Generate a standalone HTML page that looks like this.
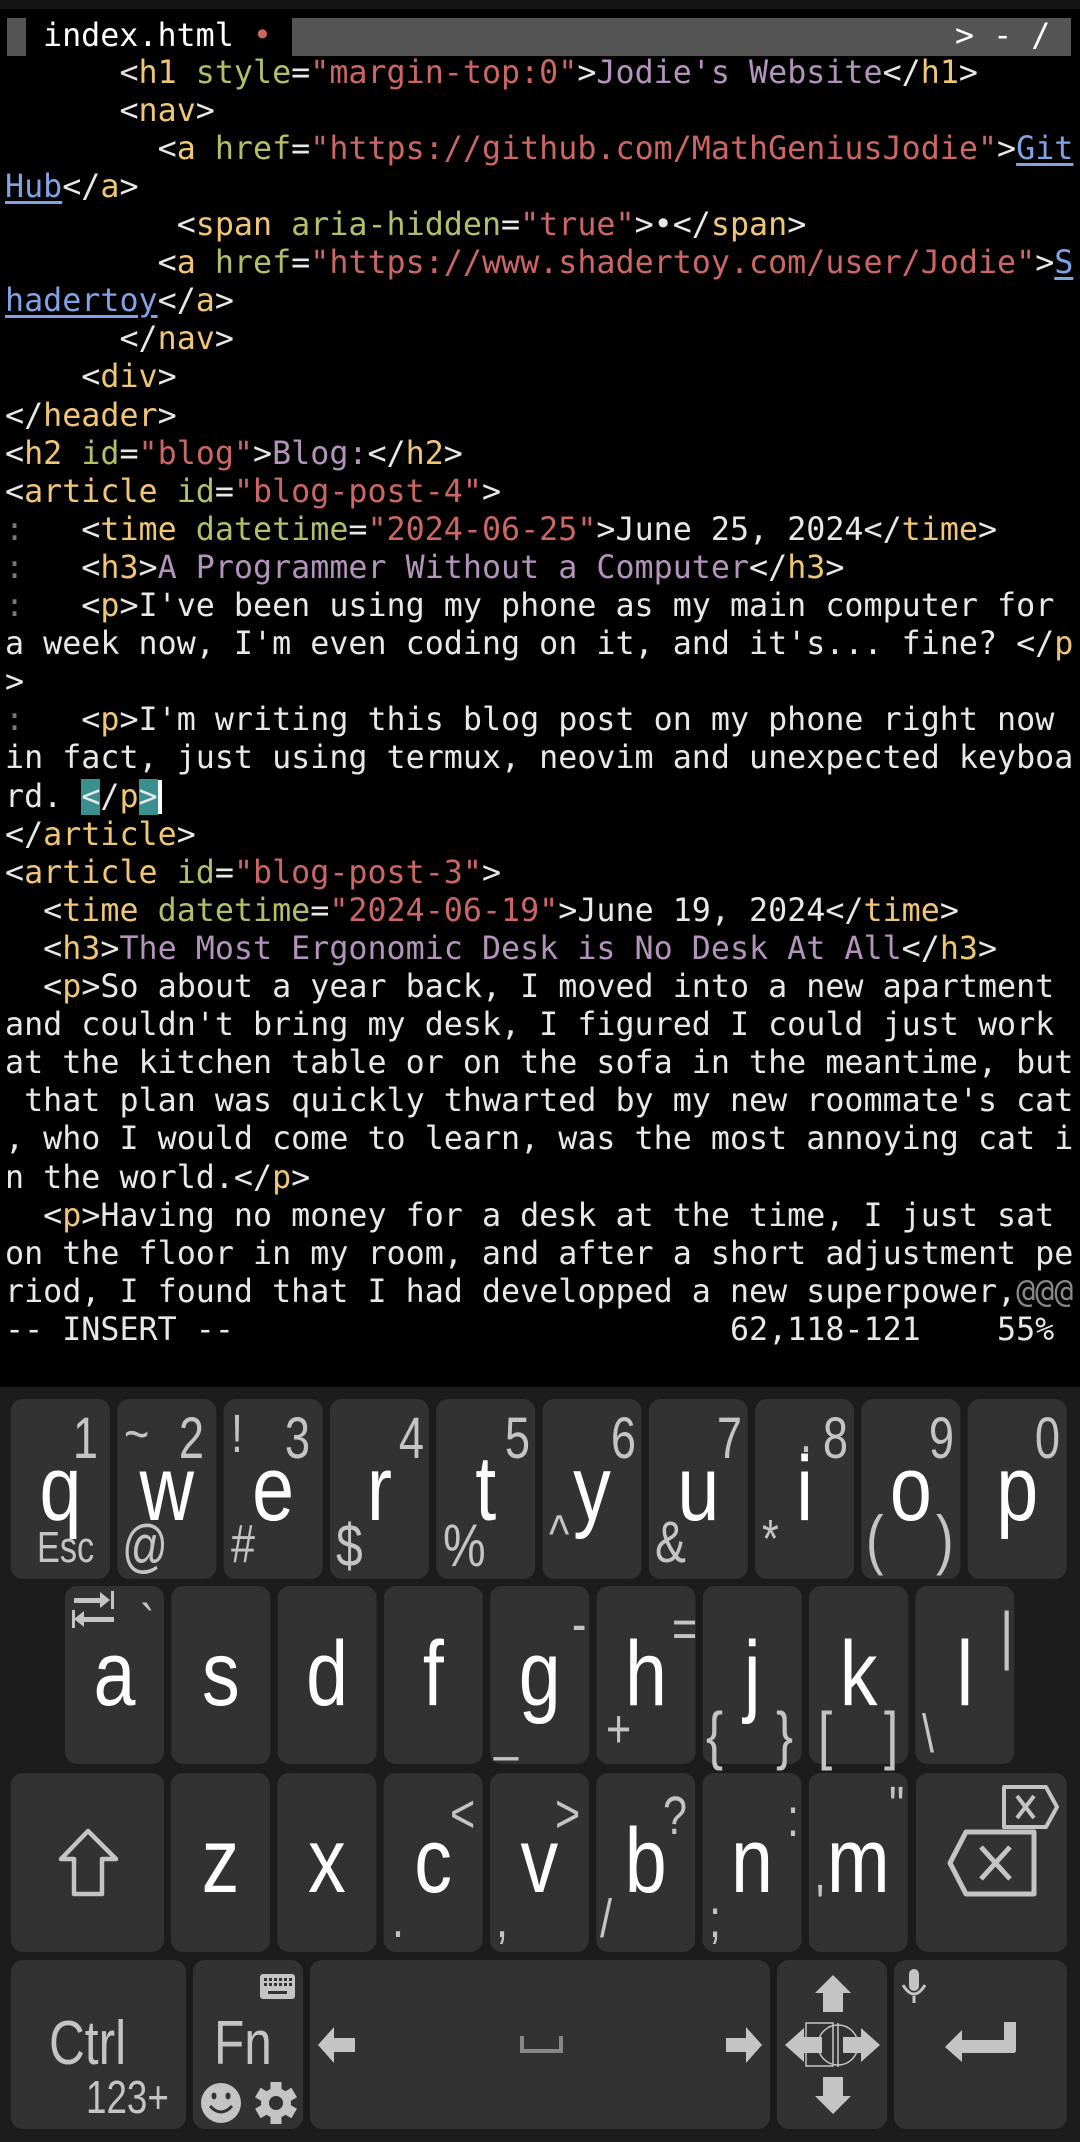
<!DOCTYPE html>
<html><head><meta charset="utf-8">
<style>
html,body{margin:0;padding:0;background:#000;}
body{width:1080px;height:2142px;position:relative;overflow:hidden;}
.term{position:absolute;left:0;top:0;width:1080px;height:1387px;background:#000;}
.ln{position:absolute;left:5px;white-space:pre;font-family:"DejaVu Sans Mono","Liberation Mono",monospace;font-size:31.7px;line-height:38px;height:38px;color:#e8e8e8;}
.t{color:#f0c674}.a{color:#b5bd68}.s{color:#cc6666}.p{color:#b294bb}.u{color:#82a2e6;text-decoration:underline;text-underline-offset:4px}.g{color:#777}.w{color:#e0e0e0}
.cur{background:#3a8f8f;}
</style></head><body>
<div class="term">
<div style="position:absolute;left:0;top:0;width:1080px;height:9px;background:#141414"></div>
<div style="position:absolute;left:7px;top:18px;width:19px;height:38px;background:#555"></div>
<div style="position:absolute;left:292px;top:18px;width:779px;height:38px;background:#555"></div>
<div class="ln" style="top:17px;left:43px;color:#fff">index.html <span class="s">•</span></div>
<div class="ln" style="top:17px;left:955px;color:#fff">&gt; - /</div>

<div class="ln" style="top:54px">      <span class="w">&lt;</span><span class="t">h1</span> <span class="a">style</span>=<span class="s">"margin-top:0"</span>&gt;<span class="p">Jodie's Website</span>&lt;/<span class="t">h1</span>&gt;</div>
<div class="ln" style="top:92px">      &lt;<span class="t">nav</span>&gt;</div>
<div class="ln" style="top:130px">        &lt;<span class="t">a</span> <span class="a">href</span>=<span class="s">"https://github.com/MathGeniusJodie"</span>&gt;<span class="u">Git</span></div>
<div class="ln" style="top:168px"><span class="u">Hub</span>&lt;/<span class="t">a</span>&gt;</div>
<div class="ln" style="top:206px">         &lt;<span class="t">span</span> <span class="a">aria-hidden</span>=<span class="s">"true"</span>&gt;•&lt;/<span class="t">span</span>&gt;</div>
<div class="ln" style="top:244px">        &lt;<span class="t">a</span> <span class="a">href</span>=<span class="s">"https://www.shadertoy.com/user/Jodie"</span>&gt;<span class="u">S</span></div>
<div class="ln" style="top:282px"><span class="u">hadertoy</span>&lt;/<span class="t">a</span>&gt;</div>
<div class="ln" style="top:320px">      &lt;/<span class="t">nav</span>&gt;</div>
<div class="ln" style="top:358px">    &lt;<span class="t">div</span>&gt;</div>
<div class="ln" style="top:397px">&lt;/<span class="t">header</span>&gt;</div>
<div class="ln" style="top:435px">&lt;<span class="t">h2</span> <span class="a">id</span>=<span class="s">"blog"</span>&gt;<span class="p">Blog:</span>&lt;/<span class="t">h2</span>&gt;</div>
<div class="ln" style="top:473px">&lt;<span class="t">article</span> <span class="a">id</span>=<span class="s">"blog-post-4"</span>&gt;</div>
<div class="ln" style="top:511px"><span class="g">:</span>   &lt;<span class="t">time</span> <span class="a">datetime</span>=<span class="s">"2024-06-25"</span>&gt;June 25, 2024&lt;/<span class="t">time</span>&gt;</div>
<div class="ln" style="top:549px"><span class="g">:</span>   &lt;<span class="t">h3</span>&gt;<span class="p">A Programmer Without a Computer</span>&lt;/<span class="t">h3</span>&gt;</div>
<div class="ln" style="top:587px"><span class="g">:</span>   &lt;<span class="t">p</span>&gt;I've been using my phone as my main computer for</div>
<div class="ln" style="top:625px">a week now, I'm even coding on it, and it's... fine? &lt;/<span class="t">p</span></div>
<div class="ln" style="top:663px">&gt;</div>
<div class="ln" style="top:701px"><span class="g">:</span>   &lt;<span class="t">p</span>&gt;I'm writing this blog post on my phone right now</div>
<div class="ln" style="top:739px">in fact, just using termux, neovim and unexpected keyboa</div>
<div class="ln" style="top:778px">rd. <span class="cur">&lt;</span>/<span class="t">p</span><span class="cur">&gt;</span><span style="display:inline-block;width:4px;height:34px;background:#fff;vertical-align:-7px"></span></div>
<div class="ln" style="top:816px">&lt;/<span class="t">article</span>&gt;</div>
<div class="ln" style="top:854px">&lt;<span class="t">article</span> <span class="a">id</span>=<span class="s">"blog-post-3"</span>&gt;</div>
<div class="ln" style="top:892px">  &lt;<span class="t">time</span> <span class="a">datetime</span>=<span class="s">"2024-06-19"</span>&gt;June 19, 2024&lt;/<span class="t">time</span>&gt;</div>
<div class="ln" style="top:930px">  &lt;<span class="t">h3</span>&gt;<span class="p">The Most Ergonomic Desk is No Desk At All</span>&lt;/<span class="t">h3</span>&gt;</div>
<div class="ln" style="top:968px">  &lt;<span class="t">p</span>&gt;So about a year back, I moved into a new apartment</div>
<div class="ln" style="top:1006px">and couldn't bring my desk, I figured I could just work</div>
<div class="ln" style="top:1044px">at the kitchen table or on the sofa in the meantime, but</div>
<div class="ln" style="top:1082px"> that plan was quickly thwarted by my new roommate's cat</div>
<div class="ln" style="top:1120px">, who I would come to learn, was the most annoying cat i</div>
<div class="ln" style="top:1159px">n the world.&lt;/<span class="t">p</span>&gt;</div>
<div class="ln" style="top:1197px">  &lt;<span class="t">p</span>&gt;Having no money for a desk at the time, I just sat</div>
<div class="ln" style="top:1235px">on the floor in my room, and after a short adjustment pe</div>
<div class="ln" style="top:1273px">riod, I found that I had developped a new superpower,<span style="color:#888">@@@</span></div>
<div class="ln" style="top:1311px">-- INSERT --                          62,118-121    55%</div>
</div>

<svg style="position:absolute;left:0;top:0" width="1080" height="2142" viewBox="0 0 1080 2142" xmlns="http://www.w3.org/2000/svg">
<rect x="0" y="1387" width="1080" height="755" fill="#1c1c1c"/>
<g fill="#323232">
<rect x="11" y="1399" width="99" height="180" rx="12"/>
<rect x="117.3" y="1399" width="99" height="180" rx="12"/>
<rect x="223.6" y="1399" width="99" height="180" rx="12"/>
<rect x="329.9" y="1399" width="99" height="180" rx="12"/>
<rect x="436.2" y="1399" width="99" height="180" rx="12"/>
<rect x="542.5" y="1399" width="99" height="180" rx="12"/>
<rect x="648.8" y="1399" width="99" height="180" rx="12"/>
<rect x="755.1" y="1399" width="99" height="180" rx="12"/>
<rect x="861.4" y="1399" width="99" height="180" rx="12"/>
<rect x="967.7" y="1399" width="99" height="180" rx="12"/>
<rect x="65" y="1586" width="99" height="178" rx="12"/>
<rect x="171.3" y="1586" width="99" height="178" rx="12"/>
<rect x="277.6" y="1586" width="99" height="178" rx="12"/>
<rect x="383.9" y="1586" width="99" height="178" rx="12"/>
<rect x="490.2" y="1586" width="99" height="178" rx="12"/>
<rect x="596.5" y="1586" width="99" height="178" rx="12"/>
<rect x="702.8" y="1586" width="99" height="178" rx="12"/>
<rect x="809.1" y="1586" width="99" height="178" rx="12"/>
<rect x="915.4" y="1586" width="99" height="178" rx="12"/>
<rect x="11" y="1773" width="153" height="179" rx="12"/>
<rect x="171" y="1773" width="99" height="179" rx="12"/>
<rect x="277.3" y="1773" width="99" height="179" rx="12"/>
<rect x="383.6" y="1773" width="99" height="179" rx="12"/>
<rect x="489.9" y="1773" width="99" height="179" rx="12"/>
<rect x="596.2" y="1773" width="99" height="179" rx="12"/>
<rect x="702.5" y="1773" width="99" height="179" rx="12"/>
<rect x="808.8" y="1773" width="99" height="179" rx="12"/>
<rect x="916" y="1773" width="151" height="179" rx="12"/>
<rect x="11" y="1960" width="175" height="169" rx="12"/>
<rect x="193" y="1960" width="110" height="169" rx="12"/>
<rect x="310" y="1960" width="460" height="169" rx="12"/>
<rect x="777" y="1960" width="110" height="169" rx="12"/>
<rect x="894" y="1960" width="173" height="169" rx="12"/>
</g>

<g font-family="'Liberation Sans',sans-serif" fill="#fff" font-size="92" text-anchor="middle">
<text transform="translate(60.5,1520) scale(.82,1)">q</text>
<text transform="translate(166.8,1520) scale(.82,1)">w</text>
<text transform="translate(273.1,1520) scale(.82,1)">e</text>
<text transform="translate(379.4,1520) scale(.82,1)">r</text>
<text transform="translate(485.7,1520) scale(.82,1)">t</text>
<text transform="translate(592,1520) scale(.82,1)">y</text>
<text transform="translate(698.3,1520) scale(.82,1)">u</text>
<text transform="translate(804.6,1520) scale(.82,1)">i</text>
<text transform="translate(910.9,1520) scale(.82,1)">o</text>
<text transform="translate(1017.2,1520) scale(.82,1)">p</text>
<text transform="translate(114.5,1705) scale(.82,1)">a</text>
<text transform="translate(220.8,1705) scale(.82,1)">s</text>
<text transform="translate(327.1,1705) scale(.82,1)">d</text>
<text transform="translate(433.4,1705) scale(.82,1)">f</text>
<text transform="translate(539.7,1705) scale(.82,1)">g</text>
<text transform="translate(646,1705) scale(.82,1)">h</text>
<text transform="translate(752.3,1705) scale(.82,1)">j</text>
<text transform="translate(858.6,1705) scale(.82,1)">k</text>
<text transform="translate(964.9,1705) scale(.82,1)">l</text>
<text transform="translate(220.5,1892) scale(.82,1)">z</text>
<text transform="translate(326.8,1892) scale(.82,1)">x</text>
<text transform="translate(433.1,1892) scale(.82,1)">c</text>
<text transform="translate(539.4,1892) scale(.82,1)">v</text>
<text transform="translate(645.7,1892) scale(.82,1)">b</text>
<text transform="translate(752,1892) scale(.82,1)">n</text>
<text transform="translate(858.3,1892) scale(.82,1)">m</text>
</g>

<g font-family="'Liberation Sans',sans-serif" fill="#c4c4c4" font-size="58" text-anchor="end">
<text transform="translate(98,1458) scale(.78,1)">1</text>
<text transform="translate(204,1458) scale(.78,1)">2</text>
<text transform="translate(310,1458) scale(.78,1)">3</text>
<text transform="translate(424,1458) scale(.78,1)">4</text>
<text transform="translate(530,1458) scale(.78,1)">5</text>
<text transform="translate(636,1458) scale(.78,1)">6</text>
<text transform="translate(742,1458) scale(.78,1)">7</text>
<text transform="translate(848,1458) scale(.78,1)">8</text>
<text transform="translate(954,1458) scale(.78,1)">9</text>
<text transform="translate(1060,1458) scale(.78,1)">0</text>
</g>
<g font-family="'Liberation Sans',sans-serif" fill="#c4c4c4" font-size="54">
<text transform="translate(124,1452) scale(.8,1)">~</text>
<text transform="translate(231,1452) scale(.8,1)">!</text>
<text transform="translate(800,1452) scale(.8,1)">.</text>
<text transform="translate(37,1562) scale(.78,1)" font-size="44">Esc</text>
<text transform="translate(122,1566) scale(.78,1)" font-size="58">@</text>
<text transform="translate(231,1562) scale(.8,1)">#</text>
<text transform="translate(336,1566) scale(.8,1)" font-size="60">$</text>
<text transform="translate(443,1566) scale(.8,1)" font-size="60">%</text>
<text transform="translate(549,1552) scale(.8,1)">^</text>
<text transform="translate(655,1562) scale(.8,1)" font-size="58">&amp;</text>
<text transform="translate(762,1557) scale(.8,1)">*</text>
<text transform="translate(866,1562) scale(.8,1)" font-size="66">(</text>
<text transform="translate(936,1562) scale(.8,1)" font-size="66">)</text>
<text transform="translate(140,1642) scale(.8,1)">`</text>
<text transform="translate(572,1642) scale(.8,1)">-</text>
<text transform="translate(672,1647) scale(.8,1)">=</text>
<text transform="translate(494,1750) scale(.8,1)">_</text>
<text transform="translate(606,1747) scale(.8,1)">+</text>
<text transform="translate(706,1757) scale(.8,1)" font-size="64">{</text>
<text transform="translate(776,1757) scale(.8,1)" font-size="64">}</text>
<text transform="translate(818,1757) scale(.8,1)" font-size="64">[</text>
<text transform="translate(884,1757) scale(.8,1)" font-size="64">]</text>
<text transform="translate(1000,1657) scale(.8,1)" font-size="64">|</text>
<text transform="translate(922,1752) scale(.8,1)">\</text>
<text transform="translate(450,1832) scale(.8,1)">&lt;</text>
<text transform="translate(555,1832) scale(.8,1)">&gt;</text>
<text transform="translate(392,1937) scale(.8,1)">.</text>
<text transform="translate(496,1937) scale(.8,1)">,</text>
<text transform="translate(663,1834) scale(.8,1)">?</text>
<text transform="translate(600,1937) scale(.8,1)">/</text>
<text transform="translate(787,1836) scale(.8,1)">:</text>
<text transform="translate(709,1937) scale(.8,1)">;</text>
<text transform="translate(889,1824) scale(.8,1)">"</text>
<text transform="translate(816,1922) scale(.8,1)">'</text>
<text transform="translate(49,2064) scale(.8,1)" font-size="62">Ctrl</text>
<text transform="translate(214,2064) scale(.8,1)" font-size="62">Fn</text>
<text transform="translate(86,2113) scale(.8,1)" font-size="46">123+</text>
</g>

<g fill="#c4c4c4">
<rect x="74" y="1598" width="28" height="5"/><polygon points="100,1592 110,1600 100,1608"/><rect x="111" y="1591" width="3" height="18"/>
<rect x="82" y="1617" width="32" height="5"/><polygon points="84,1611 74,1619 84,1627"/><rect x="72" y="1610" width="3" height="18"/>
</g>
<path d="M88 1831 L61 1859 L74 1859 L74 1894 L102 1894 L102 1859 L116 1859 Z" fill="none" stroke="#c4c4c4" stroke-width="4.5" stroke-linejoin="round"/>
<path d="M966 1832 L1034 1832 L1034 1894 L966 1894 L950 1863 Z" fill="none" stroke="#c4c4c4" stroke-width="5" stroke-linejoin="round"/>
<path d="M981 1847 L1010 1879 M1010 1847 L981 1879" stroke="#c4c4c4" stroke-width="5"/>
<path d="M1004 1787 L1046 1787 L1057 1807 L1046 1827 L1004 1827 Z" fill="none" stroke="#c4c4c4" stroke-width="4" stroke-linejoin="round"/>
<path d="M1017 1796 L1034 1818 M1034 1796 L1017 1818" stroke="#c4c4c4" stroke-width="4"/>
<rect x="260" y="1974" width="35" height="25" rx="3" fill="#c4c4c4"/>
<g fill="#323232"><rect x="264" y="1978" width="3" height="3"/><rect x="269" y="1978" width="3" height="3"/><rect x="274" y="1978" width="3" height="3"/><rect x="279" y="1978" width="3" height="3"/><rect x="284" y="1978" width="3" height="3"/><rect x="289" y="1978" width="3" height="3"/>
<rect x="264" y="1983" width="3" height="3"/><rect x="269" y="1983" width="3" height="3"/><rect x="274" y="1983" width="3" height="3"/><rect x="279" y="1983" width="3" height="3"/><rect x="284" y="1983" width="3" height="3"/><rect x="289" y="1983" width="3" height="3"/>
<rect x="268" y="1991" width="19" height="3"/></g>
<circle cx="221" cy="2103" r="20" fill="#c4c4c4"/>
<ellipse cx="214" cy="2096" rx="2.5" ry="3.5" fill="#323232"/><ellipse cx="228" cy="2096" rx="2.5" ry="3.5" fill="#323232"/>
<path d="M210 2106 Q221 2118 232 2106" stroke="#323232" stroke-width="3" fill="none"/>
<g transform="translate(276,2103)" fill="#c4c4c4">
<circle r="15"/>
<rect x="-5.5" y="-21" width="11" height="42"/>
<rect x="-5.5" y="-21" width="11" height="42" transform="rotate(60)"/>
<rect x="-5.5" y="-21" width="11" height="42" transform="rotate(120)"/>
<circle r="7" fill="#323232"/>
</g>
<polygon points="318,2045 334,2027 334,2038 355,2038 355,2052 334,2052 334,2063" fill="#c4c4c4"/>
<polygon points="762,2045 746,2027 746,2038 726,2038 726,2052 746,2052 746,2063" fill="#c4c4c4"/>
<path d="M522 2036 L522 2051 L561 2051 L561 2036" fill="none" stroke="#888" stroke-width="4"/>
<g fill="#c4c4c4">
<polygon points="833,1975 851,1993 843,1993 843,2012 823,2012 823,1993 815,1993"/>
<polygon points="833,2114 851,2096 843,2096 843,2077 823,2077 823,2096 815,2096"/>
<polygon points="785,2045 804,2028 804,2037 822,2037 822,2053 804,2053 804,2062"/>
<polygon points="880,2045 861,2028 861,2037 843,2037 843,2053 861,2053 861,2062"/>
</g>
<rect x="806" y="2023" width="27" height="43" fill="none" stroke="#c4c4c4" stroke-width="1.5"/>
<circle cx="838" cy="2045" r="20" fill="none" stroke="#c4c4c4" stroke-width="1.5"/>
<line x1="838" y1="2023" x2="838" y2="2067" stroke="#c4c4c4" stroke-width="1.5"/>
<rect x="909" y="1969" width="10" height="22" rx="5" fill="#c4c4c4"/>
<path d="M903 1985 Q914 2003 925 1985" stroke="#c4c4c4" stroke-width="3" fill="none"/>
<rect x="912.5" y="1996" width="3" height="7" fill="#c4c4c4"/>
<path d="M945 2047 L962 2030 L962 2040 L1004 2040 L1004 2022 L1016 2022 L1016 2050 Q1016 2053 1013 2053 L962 2053 L962 2062 Z" fill="#c4c4c4"/>
</svg>
</body></html>
